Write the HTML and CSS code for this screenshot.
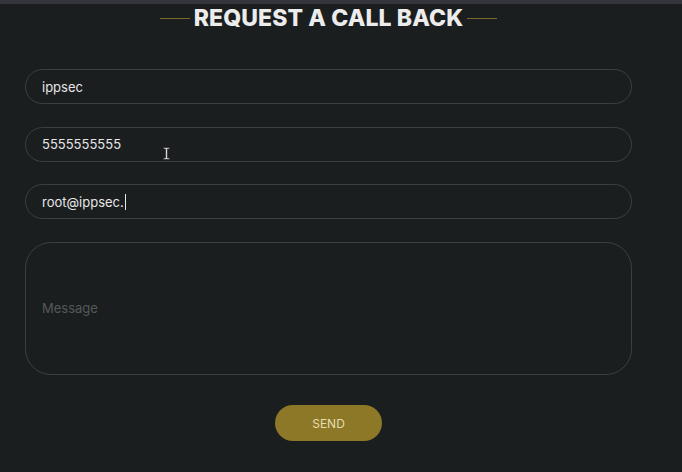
FILE: index.html
```html
<!DOCTYPE html>
<html>
<head>
<meta charset="utf-8">
<link rel="stylesheet" href="styles.css">
</head>
<body>
<div class="topbar"></div>
<main class="page">
  <h2 class="title"><span class="rule"></span><span class="title-text">REQUEST A CALL BACK</span><span class="rule"></span></h2>
  <form class="form">
    <div class="field"><span class="value">ippsec</span></div>
    <div class="field"><span class="value">5555555555</span></div>
    <div class="field"><span class="value">root@ippsec.</span><span class="caret"></span></div>
    <div class="field area"><span class="placeholder">Message</span></div>
    <div class="actions"><button type="button" class="send">SEND</button></div>
  </form>
  <svg class="ibeam" width="7" height="13" viewBox="0 0 7 13">
    <path d="M0.5 0.5h6v1.5h-2v9h2v1.5h-6v-1.5h2v-9h-2z" fill="#d8d8d8" stroke="#333" stroke-width="0.8"/>
  </svg>
</main>
</body>
</html>
```
FILE: styles.css
```css
* { box-sizing: border-box; }
html, body { margin: 0; padding: 0; }
body {
  background: #1b1e1f;
  font-family: "Inter", "Noto Sans", sans-serif;
  width: 682px;
  height: 472px;
  overflow: hidden;
}
.topbar { height: 4px; background: #34353b; }
.page { position: relative; padding: 0 50px 0 25px; }
.title {
  margin: 0;
  display: flex;
  align-items: center;
  justify-content: center;
  gap: 4px;
  height: 28px;
  width: 657px;
  transform: translateX(-25px);
}
.title-text {
  color: #ececec;
  font-size: 23px;
  font-weight: 800;
  letter-spacing: 0.1px;
  line-height: 28px;
}
.rule { width: 30px; height: 1px; background: #7a6a2c; }
.form {
  display: flex;
  flex-direction: column;
  gap: 22.5px;
  margin-top: 37px;
  width: 607px;
}
.field {
  height: 35px;
  border: 1px solid #3c3f40;
  border-radius: 18px;
  padding: 0 16px;
  display: flex;
  align-items: center;
  font-size: 13px;
  color: #e6e6e6;
}
.value { letter-spacing: 0; }
.caret { width: 1px; height: 16px; background: #e6e6e6; margin-left: 1px; }
.field.area { height: 133px; border-radius: 26px; }
.placeholder { color: #55585a; }
.actions { display: flex; justify-content: center; margin-top: 8px; }
.send {
  width: 107px;
  height: 36px;
  border: none;
  border-radius: 18px;
  background: #8c7826;
  color: #e6ddb0;
  font-family: inherit;
  font-size: 12px;
  padding: 0;
}
.ibeam { position: absolute; left: 163px; top: 143px; }
```
